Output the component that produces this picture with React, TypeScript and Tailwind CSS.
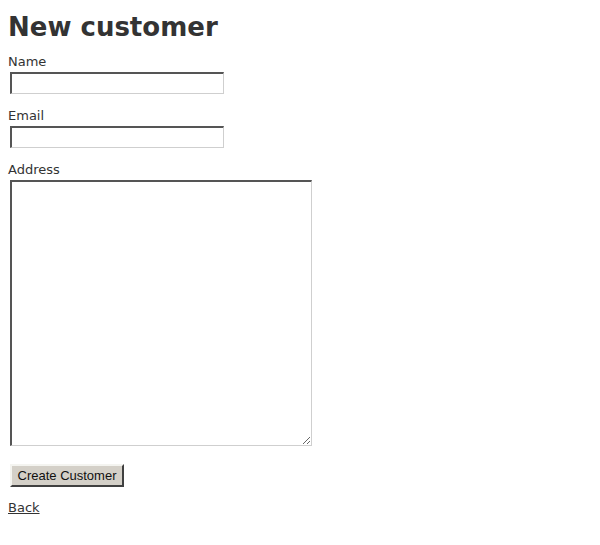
export default function App() {
  return (
    <div className="min-h-screen bg-white px-2 pt-3 text-[#333] font-['DejaVu_Sans','Verdana',sans-serif] text-[13px] leading-[18px]">
      <h1 className="text-[26px] leading-[30px] font-bold">New customer</h1>

      <form className="mt-[10px] flex flex-col items-start" onSubmit={(e) => e.preventDefault()}>
        {/* Name */}
        <label className="block h-[18px] pt-px leading-[17px]">Name</label>
        <input
          type="text"
          className="mt-[2px] ml-[2px] h-[22px] w-[214px] bg-white border-t-2 border-l-2 border-b border-r border-t-[#555] border-l-[#555] border-b-[#cfcfcf] border-r-[#cfcfcf] outline-none px-1"
        />

        {/* Email */}
        <label className="mt-3 block h-[18px] pt-px leading-[17px]">Email</label>
        <input
          type="text"
          className="mt-[2px] ml-[2px] h-[22px] w-[214px] bg-white border-t-2 border-l-2 border-b border-r border-t-[#555] border-l-[#555] border-b-[#cfcfcf] border-r-[#cfcfcf] outline-none px-1"
        />

        {/* Address */}
        <label className="mt-3 block h-[18px] pt-px leading-[17px]">Address</label>
        <textarea className="mt-[2px] ml-[2px] h-[266px] w-[302px] bg-white border-t-2 border-l-2 border-b border-r border-t-[#555] border-l-[#555] border-b-[#cfcfcf] border-r-[#cfcfcf] outline-none p-1" />

        <button
          type="submit"
          className="mt-[18px] ml-[2px] h-[23px] w-[114px] bg-[#d4d0c8] border-2 border-t-[#f4f4f0] border-l-[#f4f4f0] border-b-[#404040] border-r-[#404040] font-['Liberation_Sans',Arial,sans-serif] text-[13px] leading-[17px] text-[#111]"
        >
          Create Customer
        </button>
      </form>

      <a href="#" className="mt-[12px] block w-fit underline text-[#333] leading-[17px]">
        Back
      </a>
    </div>
  );
}
